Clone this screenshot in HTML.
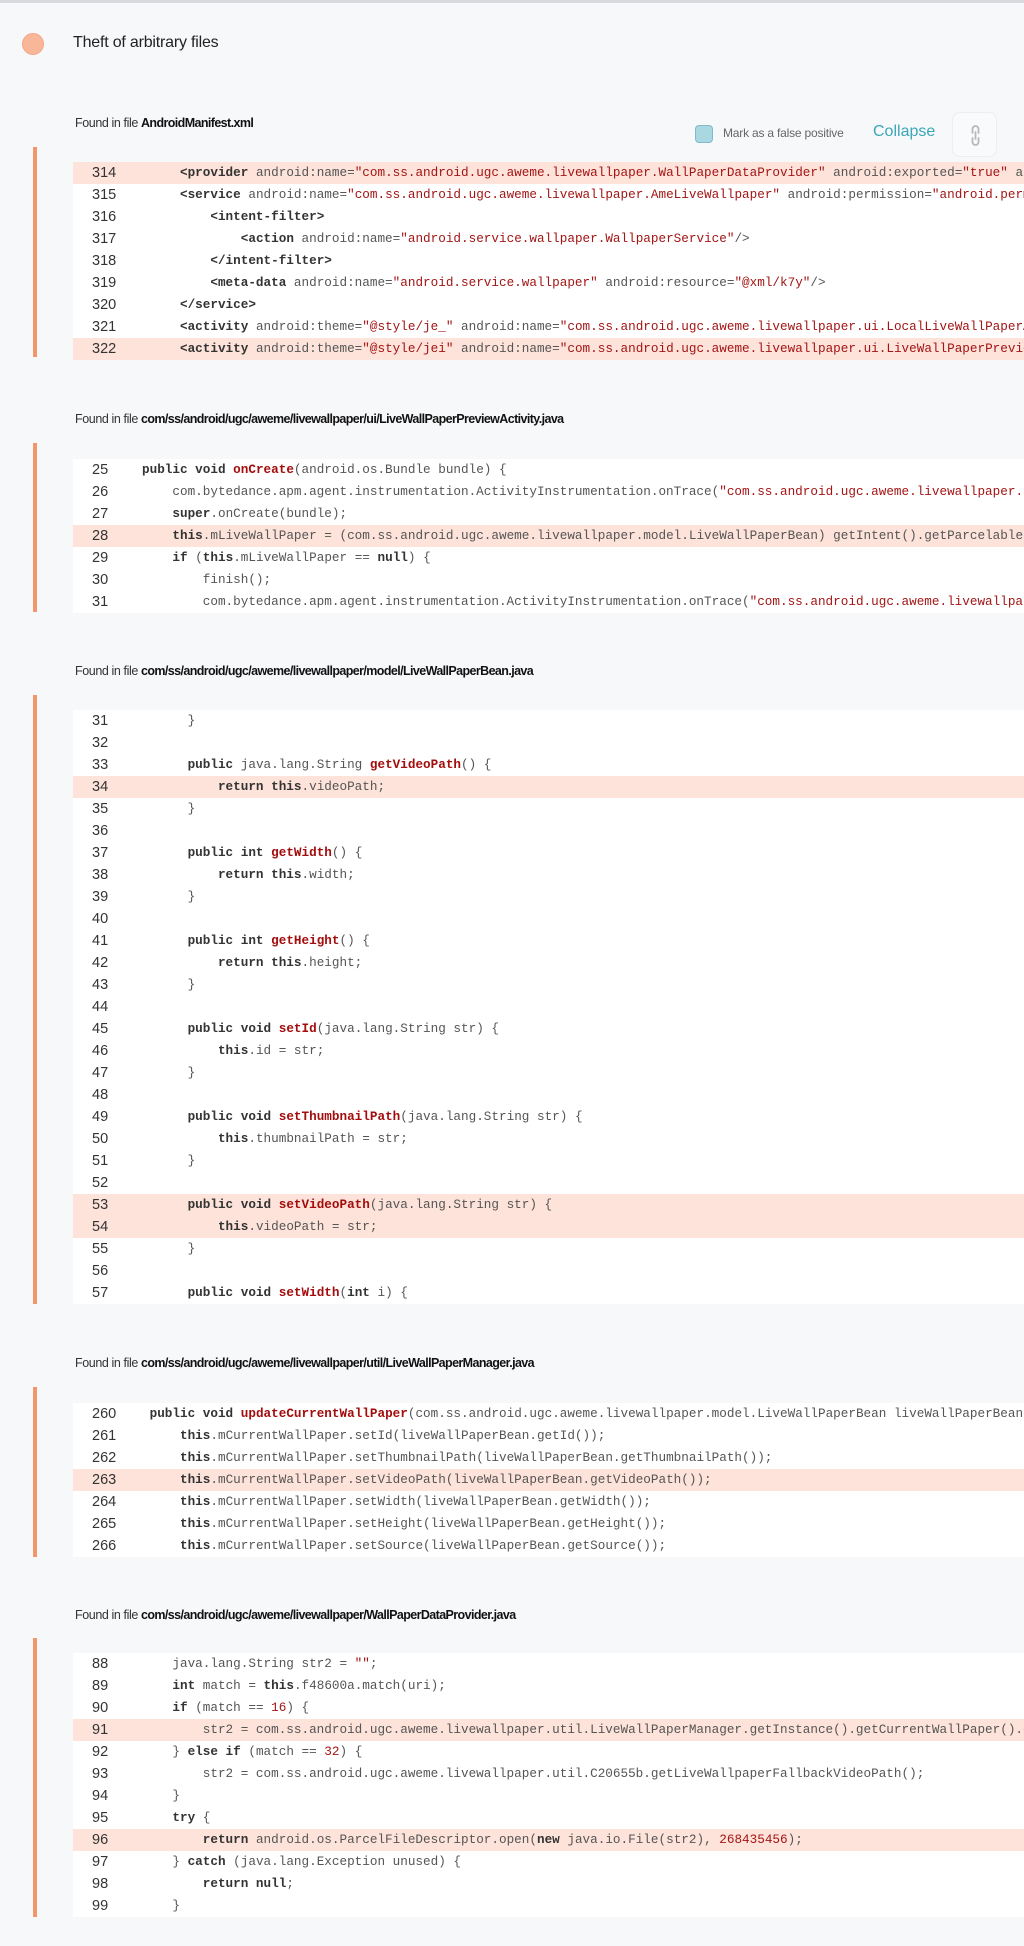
<!DOCTYPE html>
<html><head><meta charset="utf-8"><style>
*{margin:0;padding:0;box-sizing:border-box}
html,body{width:1024px;height:1946px;background:#f7f8fa;overflow:hidden;font-family:"Liberation Sans",sans-serif;position:relative}
.topline{position:absolute;left:0;top:0;width:1024px;height:3px;background:#d8dadd}
.dot{position:absolute;left:22px;top:33px;width:22px;height:22px;border-radius:50%;background:#f9b79a;border:1px solid #f3a484}
.title{position:absolute;left:73px;top:34px;font-size:16px;color:#222;letter-spacing:-0.2px}
.found{position:absolute;left:75px;font-size:12.5px;color:#333;letter-spacing:-0.4px}
.found b{color:#111;font-weight:bold;letter-spacing:-0.6px}
.bar{position:absolute;left:33px;width:4px;background:#f3966b}
.block{position:absolute;left:73px;width:951px;background:#fff}
.row{height:22px;line-height:22px;position:relative;white-space:pre;overflow:hidden}
.row.h{background:#fde3da}
.n{position:absolute;left:19px;top:0;font-size:14.5px;color:#333;font-family:"Liberation Sans",sans-serif}
.c{position:absolute;left:69px;top:0;font-family:"Liberation Mono",monospace;font-size:12.67px;color:#555}
.k{font-weight:bold;color:#333}
.m{font-weight:bold;color:#a30d0d}
.s{color:#a31515}
.cb{position:absolute;left:695px;top:125px;width:18px;height:18px;border-radius:4px;background:#a9d7e2;border:1.5px solid #7fbccb}
.mfp{position:absolute;left:723px;top:126px;font-size:12px;color:#666;letter-spacing:-0.2px}
.col{position:absolute;left:873px;top:123px;font-size:16px;color:#3aa7b7}
.ib{position:absolute;left:952px;top:112px;width:45px;height:45px;border:1px solid #eceef0;border-radius:8px;background:#f9fafb}
</style></head><body>
<div class="topline"></div>
<div class="dot"></div>
<div class="title">Theft of arbitrary files</div>

<div class="found" style="top:116px">Found in file <b>AndroidManifest.xml</b></div>
<div class="cb"></div><div class="mfp">Mark as a false positive</div><div class="col">Collapse</div>
<div class="ib"><svg width="45" height="45" viewBox="0 0 45 45"><path d="M19.5 20 V16 a3 3 0 0 1 6 0 V20 M19.5 25 V29 a3 3 0 0 0 6 0 V25 M22.5 19 V26" stroke="#b5b9bd" stroke-width="1.8" fill="none" stroke-linecap="round"/></svg></div>
<div class="bar" style="top:147px;height:210px"></div>
<div class="block" style="top:162px">
<div class="row h"><span class="n">314</span><span class="c">     <span class="k">&lt;provider</span> android:name=<span class="s">"com.ss.android.ugc.aweme.livewallpaper.WallPaperDataProvider"</span> android:exported=<span class="s">"true"</span> android:authorities=<span class="s">"x"</span></span></div>
<div class="row"><span class="n">315</span><span class="c">     <span class="k">&lt;service</span> android:name=<span class="s">"com.ss.android.ugc.aweme.livewallpaper.AmeLiveWallpaper"</span> android:permission=<span class="s">"android.permission.BIND</span></span></div>
<div class="row"><span class="n">316</span><span class="c">         <span class="k">&lt;intent-filter&gt;</span></span></div>
<div class="row"><span class="n">317</span><span class="c">             <span class="k">&lt;action</span> android:name=<span class="s">"android.service.wallpaper.WallpaperService"</span>/&gt;</span></div>
<div class="row"><span class="n">318</span><span class="c">         <span class="k">&lt;/intent-filter&gt;</span></span></div>
<div class="row"><span class="n">319</span><span class="c">         <span class="k">&lt;meta-data</span> android:name=<span class="s">"android.service.wallpaper"</span> android:resource=<span class="s">"@xml/k7y"</span>/&gt;</span></div>
<div class="row"><span class="n">320</span><span class="c">     <span class="k">&lt;/service&gt;</span></span></div>
<div class="row"><span class="n">321</span><span class="c">     <span class="k">&lt;activity</span> android:theme=<span class="s">"@style/je_"</span> android:name=<span class="s">"com.ss.android.ugc.aweme.livewallpaper.ui.LocalLiveWallPaperActivity"</span></span></div>
<div class="row h"><span class="n">322</span><span class="c">     <span class="k">&lt;activity</span> android:theme=<span class="s">"@style/jei"</span> android:name=<span class="s">"com.ss.android.ugc.aweme.livewallpaper.ui.LiveWallPaperPreviewActivity"</span></span></div>
</div>

<div class="found" style="top:412px">Found in file <b>com/ss/android/ugc/aweme/livewallpaper/ui/LiveWallPaperPreviewActivity.java</b></div>
<div class="bar" style="top:443px;height:169px"></div>
<div class="block" style="top:459px">
<div class="row"><span class="n">25</span><span class="c"><span class="k">public void</span> <span class="m">onCreate</span>(android.os.Bundle bundle) {</span></div>
<div class="row"><span class="n">26</span><span class="c">    com.bytedance.apm.agent.instrumentation.ActivityInstrumentation.onTrace(<span class="s">"com.ss.android.ugc.aweme.livewallpaper.ui"</span></span></div>
<div class="row"><span class="n">27</span><span class="c">    <span class="k">super</span>.onCreate(bundle);</span></div>
<div class="row h"><span class="n">28</span><span class="c">    <span class="k">this</span>.mLiveWallPaper = (com.ss.android.ugc.aweme.livewallpaper.model.LiveWallPaperBean) getIntent().getParcelableExtra(</span></div>
<div class="row"><span class="n">29</span><span class="c">    <span class="k">if</span> (<span class="k">this</span>.mLiveWallPaper == <span class="k">null</span>) {</span></div>
<div class="row"><span class="n">30</span><span class="c">        finish();</span></div>
<div class="row"><span class="n">31</span><span class="c">        com.bytedance.apm.agent.instrumentation.ActivityInstrumentation.onTrace(<span class="s">"com.ss.android.ugc.aweme.livewallpaper"</span></span></div>
</div>

<div class="found" style="top:664px">Found in file <b>com/ss/android/ugc/aweme/livewallpaper/model/LiveWallPaperBean.java</b></div>
<div class="bar" style="top:695px;height:609px"></div>
<div class="block" style="top:710px">
<div class="row"><span class="n">31</span><span class="c">      }</span></div>
<div class="row"><span class="n">32</span><span class="c"></span></div>
<div class="row"><span class="n">33</span><span class="c">      <span class="k">public</span> java.lang.String <span class="m">getVideoPath</span>() {</span></div>
<div class="row h"><span class="n">34</span><span class="c">          <span class="k">return this</span>.videoPath;</span></div>
<div class="row"><span class="n">35</span><span class="c">      }</span></div>
<div class="row"><span class="n">36</span><span class="c"></span></div>
<div class="row"><span class="n">37</span><span class="c">      <span class="k">public int</span> <span class="m">getWidth</span>() {</span></div>
<div class="row"><span class="n">38</span><span class="c">          <span class="k">return this</span>.width;</span></div>
<div class="row"><span class="n">39</span><span class="c">      }</span></div>
<div class="row"><span class="n">40</span><span class="c"></span></div>
<div class="row"><span class="n">41</span><span class="c">      <span class="k">public int</span> <span class="m">getHeight</span>() {</span></div>
<div class="row"><span class="n">42</span><span class="c">          <span class="k">return this</span>.height;</span></div>
<div class="row"><span class="n">43</span><span class="c">      }</span></div>
<div class="row"><span class="n">44</span><span class="c"></span></div>
<div class="row"><span class="n">45</span><span class="c">      <span class="k">public void</span> <span class="m">setId</span>(java.lang.String str) {</span></div>
<div class="row"><span class="n">46</span><span class="c">          <span class="k">this</span>.id = str;</span></div>
<div class="row"><span class="n">47</span><span class="c">      }</span></div>
<div class="row"><span class="n">48</span><span class="c"></span></div>
<div class="row"><span class="n">49</span><span class="c">      <span class="k">public void</span> <span class="m">setThumbnailPath</span>(java.lang.String str) {</span></div>
<div class="row"><span class="n">50</span><span class="c">          <span class="k">this</span>.thumbnailPath = str;</span></div>
<div class="row"><span class="n">51</span><span class="c">      }</span></div>
<div class="row"><span class="n">52</span><span class="c"></span></div>
<div class="row h"><span class="n">53</span><span class="c">      <span class="k">public void</span> <span class="m">setVideoPath</span>(java.lang.String str) {</span></div>
<div class="row h"><span class="n">54</span><span class="c">          <span class="k">this</span>.videoPath = str;</span></div>
<div class="row"><span class="n">55</span><span class="c">      }</span></div>
<div class="row"><span class="n">56</span><span class="c"></span></div>
<div class="row"><span class="n">57</span><span class="c">      <span class="k">public void</span> <span class="m">setWidth</span>(<span class="k">int</span> i) {</span></div>
</div>

<div class="found" style="top:1356px">Found in file <b>com/ss/android/ugc/aweme/livewallpaper/util/LiveWallPaperManager.java</b></div>
<div class="bar" style="top:1387px;height:170px"></div>
<div class="block" style="top:1403px">
<div class="row"><span class="n">260</span><span class="c"> <span class="k">public void</span> <span class="m">updateCurrentWallPaper</span>(com.ss.android.ugc.aweme.livewallpaper.model.LiveWallPaperBean liveWallPaperBean) {</span></div>
<div class="row"><span class="n">261</span><span class="c">     <span class="k">this</span>.mCurrentWallPaper.setId(liveWallPaperBean.getId());</span></div>
<div class="row"><span class="n">262</span><span class="c">     <span class="k">this</span>.mCurrentWallPaper.setThumbnailPath(liveWallPaperBean.getThumbnailPath());</span></div>
<div class="row h"><span class="n">263</span><span class="c">     <span class="k">this</span>.mCurrentWallPaper.setVideoPath(liveWallPaperBean.getVideoPath());</span></div>
<div class="row"><span class="n">264</span><span class="c">     <span class="k">this</span>.mCurrentWallPaper.setWidth(liveWallPaperBean.getWidth());</span></div>
<div class="row"><span class="n">265</span><span class="c">     <span class="k">this</span>.mCurrentWallPaper.setHeight(liveWallPaperBean.getHeight());</span></div>
<div class="row"><span class="n">266</span><span class="c">     <span class="k">this</span>.mCurrentWallPaper.setSource(liveWallPaperBean.getSource());</span></div>
</div>

<div class="found" style="top:1608px">Found in file <b>com/ss/android/ugc/aweme/livewallpaper/WallPaperDataProvider.java</b></div>
<div class="bar" style="top:1638px;height:279px"></div>
<div class="block" style="top:1653px">
<div class="row"><span class="n">88</span><span class="c">    java.lang.String str2 = <span class="s">""</span>;</span></div>
<div class="row"><span class="n">89</span><span class="c">    <span class="k">int</span> match = <span class="k">this</span>.f48600a.match(uri);</span></div>
<div class="row"><span class="n">90</span><span class="c">    <span class="k">if</span> (match == <span class="s">16</span>) {</span></div>
<div class="row h"><span class="n">91</span><span class="c">        str2 = com.ss.android.ugc.aweme.livewallpaper.util.LiveWallPaperManager.getInstance().getCurrentWallPaper().getVideoPath();</span></div>
<div class="row"><span class="n">92</span><span class="c">    } <span class="k">else if</span> (match == <span class="s">32</span>) {</span></div>
<div class="row"><span class="n">93</span><span class="c">        str2 = com.ss.android.ugc.aweme.livewallpaper.util.C20655b.getLiveWallpaperFallbackVideoPath();</span></div>
<div class="row"><span class="n">94</span><span class="c">    }</span></div>
<div class="row"><span class="n">95</span><span class="c">    <span class="k">try</span> {</span></div>
<div class="row h"><span class="n">96</span><span class="c">        <span class="k">return</span> android.os.ParcelFileDescriptor.open(<span class="k">new</span> java.io.File(str2), <span class="s">268435456</span>);</span></div>
<div class="row"><span class="n">97</span><span class="c">    } <span class="k">catch</span> (java.lang.Exception unused) {</span></div>
<div class="row"><span class="n">98</span><span class="c">        <span class="k">return null</span>;</span></div>
<div class="row"><span class="n">99</span><span class="c">    }</span></div>
</div>
</body></html>
